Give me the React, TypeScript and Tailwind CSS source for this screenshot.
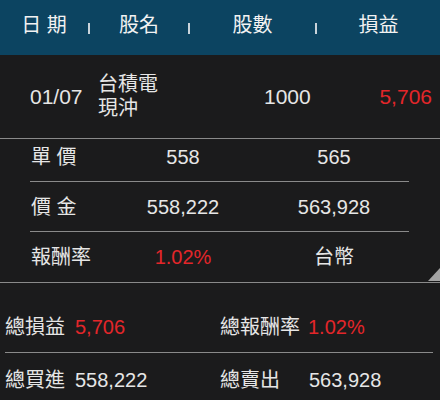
import React from "react";

const font = { fontFamily: '"Liberation Sans", "Noto Sans CJK TC", sans-serif' };

function Pipe() {
  return <div className="w-[2px] h-[11px] mt-[6px] bg-[#c9d3da] shrink-0" />;
}

function DetailRow({
  label,
  a,
  b,
  aRed,
  className,
}: {
  label: string;
  a: string;
  b: string;
  aRed?: boolean;
  className: string;
}) {
  return (
    <div className={`flex items-center ${className}`}>
      <div className="w-[110px] pl-[1px]">{label}</div>
      <div className={`w-[86px] text-center ${aRed ? "text-[#e3262a]" : ""}`}>{a}</div>
      <div className="w-[150px] ml-[33px] text-center">{b}</div>
    </div>
  );
}

export default function App() {
  return (
    <div
      className="w-[440px] h-[400px] overflow-hidden bg-[#1b1b1c] text-[#e6e6e6] text-[20px] leading-[24px]"
      style={font}
    >
      {/* header */}
      <div className="h-[55px] bg-[#0c4461] text-[#f2f2f2] flex items-center pb-[5px]">
        <div className="w-[88px] text-center">日 期</div>
        <Pipe />
        <div className="w-[98px] text-center">股名</div>
        <Pipe />
        <div className="w-[125px] text-center">股數</div>
        <Pipe />
        <div className="w-[123px] text-center">損益</div>
      </div>

      {/* trade row */}
      <div className="h-[84px] border-b border-[#8a8a8a] flex items-center">
        <div className="w-[98px] pl-[30px] text-[21px]">01/07</div>
        <div className="w-[166px] pb-[2px]">
          <div>台積電</div>
          <div>現沖</div>
        </div>
        <div className="w-[46px] text-[21px]">1000</div>
        <div className="ml-auto pr-[8px] text-[21px] text-[#e3262a]">5,706</div>
      </div>

      {/* detail */}
      <div className="relative border-b border-[#8a8a8a]">
        <div className="ml-[30px] w-[379px]">
          <DetailRow
            label="單 價"
            a="558"
            b="565"
            className="h-[43px] pb-[6px] border-b border-[#8a8a8a]"
          />
          <DetailRow
            label="價 金"
            a="558,222"
            b="563,928"
            className="h-[50px] border-b border-[#8a8a8a]"
          />
          <DetailRow label="報酬率" a="1.02%" b="台幣" aRed className="h-[50px]" />
        </div>
        <svg
          className="absolute right-0 bottom-[1px]"
          width="12"
          height="13"
          viewBox="0 0 12 13"
        >
          <polygon points="12,0 12,13 0,13" fill="#a3a3a3" />
        </svg>
      </div>

      {/* totals */}
      <div className="ml-[5px] w-[428px]">
        <div className="h-[70px] flex items-end pb-[13px] border-b border-[#8a8a8a]">
          <div className="w-[70px]">總損益</div>
          <div className="w-[145px] text-[#e3262a]">5,706</div>
          <div className="w-[88px]">總報酬率</div>
          <div className="text-[#e3262a]">1.02%</div>
        </div>
        <div className="flex items-center pt-[15px]">
          <div className="w-[70px]">總買進</div>
          <div className="w-[145px]">558,222</div>
          <div className="w-[89px]">總賣出</div>
          <div>563,928</div>
        </div>
      </div>
    </div>
  );
}
